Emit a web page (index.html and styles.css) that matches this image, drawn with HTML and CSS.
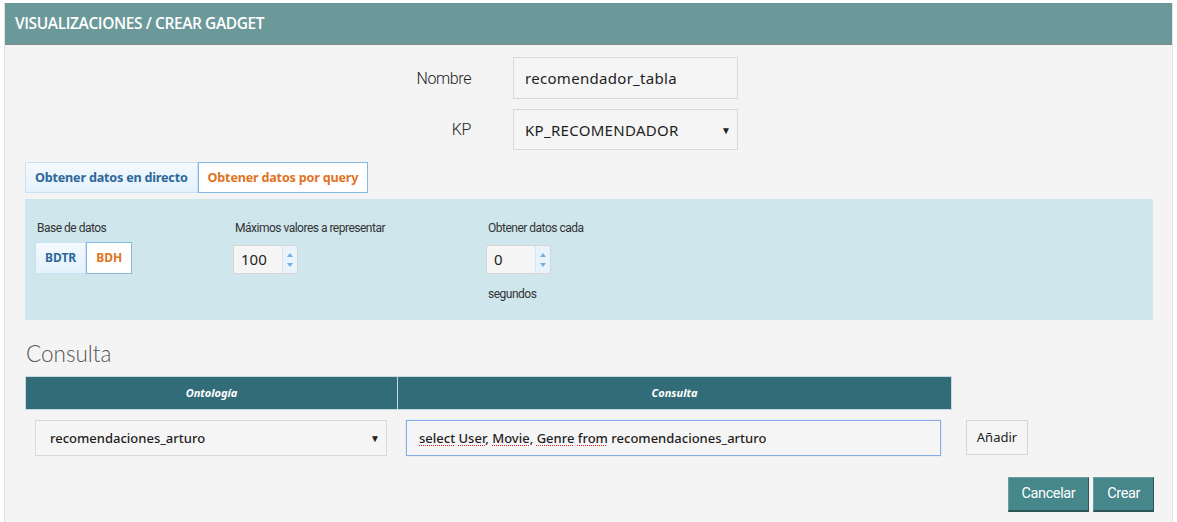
FILE: index.html
```html
<!DOCTYPE html>
<html lang="es">
<head>
<meta charset="utf-8">
<title>Crear gadget</title>
<link rel="stylesheet" href="styles.css">
</head>
<body>
<div class="card">
  <div class="card-head">VISUALIZACIONES / CREAR GADGET</div>
  <div class="card-body">
    <div class="form-row">
      <label class="form-label">Nombre</label>
      <div class="field"><span>recomendador_tabla</span></div>
    </div>
    <div class="form-row form-row-kp">
      <label class="form-label">KP</label>
      <div class="field field-select"><span>KP_RECOMENDADOR</span><span class="caret">▼</span></div>
    </div>

    <div class="tabs">
      <div class="tab">Obtener datos en directo</div>
      <div class="tab tab-active">Obtener datos por query</div>
    </div>

    <div class="panel">
      <div class="col col-db">
        <div class="col-label">Base de datos</div>
        <div class="btn-group">
          <div class="seg">BDTR</div>
          <div class="seg seg-active">BDH</div>
        </div>
      </div>
      <div class="col col-max">
        <div class="col-label">Máximos valores a representar</div>
        <div class="spin"><span class="spin-val">100</span><span class="spin-btns"><span class="up"></span><span class="down"></span></span></div>
      </div>
      <div class="col">
        <div class="col-label">Obtener datos cada</div>
        <div class="spin"><span class="spin-val">0</span><span class="spin-btns"><span class="up"></span><span class="down"></span></span></div>
        <div class="col-label col-sub">segundos</div>
      </div>
    </div>

    <h2 class="section-title">Consulta</h2>
    <div class="qtable">
      <div class="qhead">
        <div class="qh qh-onto">Ontología</div>
        <div class="qh qh-query">Consulta</div>
      </div>
      <div class="qrow">
        <div class="qcell qcell-onto">
          <div class="field field-select field-small"><span>recomendaciones_arturo</span><span class="caret">▼</span></div>
        </div>
        <div class="qcell qcell-query">
          <div class="field field-small field-focus"><span><span class="spell">select</span> <span class="spell">User</span>, <span class="spell">Movie</span>, <span class="spell">Genre</span> <span class="spell">from</span> recomendaciones_arturo</span></div>
        </div>
        <div class="add-btn">Añadir</div>
      </div>
    </div>

    <div class="actions">
      <div class="btn">Cancelar</div>
      <div class="btn">Crear</div>
    </div>
  </div>
</div>
</body>
</html>
```

FILE: styles.css
```css
* { box-sizing: border-box; }
html, body { margin: 0; padding: 0; background: #ffffff; }
body { font-family: Roboto, "Noto Sans", sans-serif; color: #333; }

.card {
  margin: 3px 4px 0 4px;
  width: 1169px;
  border-left: 1px solid #e2e2e2;
  border-right: 1px solid #e2e2e2;
  background: #f4f4f4;
  height: 519px;
}
.card-head {
  height: 42px;
  background: #6b9999;
  border-bottom: 1px solid #7f8c8c;
  color: #fff;
  font-family: "Open Sans", Roboto, sans-serif;
  font-weight: 600;
  font-size: 15.5px;
  letter-spacing: -0.4px;
  line-height: 41px;
  padding-left: 10px;
}
.card-body { padding-top: 12px; }

.form-row { display: flex; align-items: center; height: 42px; }
.form-row-kp { margin-top: 10px; height: 41px; }
.form-label {
  width: 466px;
  text-align: right;
  margin-right: 42px;
  font-size: 16px;
  font-weight: 300;
  letter-spacing: -0.4px;
  color: #222;
}
.field {
  width: 225px;
  height: 100%;
  border: 1px solid #d9d9d9;
  background: #f5f5f5;
  display: flex;
  align-items: center;
  padding: 0 11px;
  font-family: "Noto Sans", sans-serif;
  font-size: 15px;
  letter-spacing: 0.3px;
  color: #1e1e1e;
}
.field-select { justify-content: space-between; padding-right: 6px; }
.caret { font-size: 10px; color: #222; letter-spacing: 0; }

.tabs { display: flex; margin: 12px 0 0 20px; height: 31px; }
.tab {
  padding: 0 9px;
  border: 1px solid #c9e1f3;
  background: linear-gradient(#f4f9fe, #e4f1fc);
  color: #2c679a;
  font-family: "Noto Sans", sans-serif;
  font-weight: 700;
  font-size: 12.6px;
  letter-spacing: -0.2px;
  line-height: 29px;
}
.tab-active {
  background: #fff;
  border-color: #85b7e3;
  color: #e07324;
}

.panel {
  margin: 6px 0 0 20px;
  width: 1128px;
  height: 121px;
  background: #cfe6ed;
  display: flex;
  padding: 21px 10px 20px;
}
.col { display: flex; flex-direction: column; align-items: flex-start; }
.col-db { width: 198px; }
.col-max { width: 253px; }
.col-label {
  font-size: 12px;
  letter-spacing: -0.5px;
  line-height: 17px;
  padding-left: 2px;
  color: #333;
}
.col-sub { margin-top: 12px; }

.btn-group { display: flex; margin-top: 5px; height: 32px; }
.seg {
  padding: 0 9px;
  border: 1px solid #c9e1f3;
  background: linear-gradient(#f4f9fe, #e4f1fc);
  color: #2c679a;
  font-family: "Noto Sans", sans-serif;
  font-weight: 700;
  font-size: 12px;
  line-height: 30px;
}
.seg-active { background: #fff; border-color: #85b7e3; color: #e07324; }

.spin {
  margin-top: 8px;
  width: 65px;
  height: 29px;
  border: 1px solid #d6d6d6;
  background: #f5f5f5;
  display: flex;
}
.spin-val {
  flex: 1;
  padding-left: 7px;
  font-family: "Noto Sans", sans-serif;
  font-size: 15px;
  line-height: 27px;
  color: #1e1e1e;
}
.spin-btns {
  width: 15px;
  border-left: 1px solid #d9e5ee;
  background: #e8f3fc;
  display: flex;
  flex-direction: column;
  justify-content: center;
  align-items: center;
  gap: 6px;
}
.up, .down { width: 0; height: 0; border-left: 3.5px solid transparent; border-right: 3.5px solid transparent; }
.up { border-bottom: 4px solid #7aaee0; }
.down { border-top: 4px solid #7aaee0; }

.section-title {
  margin: 20px 0 8px 21px;
  font-family: Lato, Roboto, sans-serif;
  font-weight: 300;
  font-size: 22.5px;
  line-height: 28px;
  color: #555;
}

.qtable { margin-left: 20px; }
.qhead { display: flex; width: 927px; height: 34px; background: #336c79; border: 1px solid #c5dcdf; }
.qh {
  color: #fff;
  font-family: "Noto Sans", sans-serif;
  font-weight: 700;
  font-style: italic;
  font-size: 11px;
  line-height: 32px;
  text-align: center;
}
.qh-onto { width: 372px; border-right: 1px solid #c5dcdf; }
.qh-query { flex: 1; }

.qrow { display: flex; align-items: flex-start; margin-top: 10px; height: 36px; }
.qcell-onto { width: 372px; padding-left: 10px; padding-right: 10px; height: 36px; }
.qcell-query { width: 554px; padding-left: 9px; padding-right: 10px; height: 36px; }
.field-small { width: 100%; height: 36px; font-size: 13px; font-weight: 500; letter-spacing: 0; padding-left: 14px; }
.qcell-query .field-small { padding-left: 12px; }
.field-focus { border-color: #88acea; box-shadow: 0 0 1px #a8c4f0; }
.spell { text-decoration: underline dotted #e02020; text-decoration-thickness: 1px; text-underline-offset: 2px; }
.add-btn {
  margin-left: 15px;
  width: 62px;
  height: 35px;
  border: 1px solid #d6d6d6;
  background: #f5f5f5;
  font-family: "Noto Sans", sans-serif;
  font-size: 13px;
  line-height: 33px;
  text-align: center;
  color: #222;
}

.actions { display: flex; justify-content: flex-end; gap: 4px; width: 1149px; margin-top: 21px; }
.btn {
  height: 35px;
  padding: 0 13px;
  background: #45878a;
  border: 1px solid #6e9c9c;
  border-right-color: #2f5456;
  border-bottom: 2px solid #2f5456;
  color: #fff;
  font-size: 14.5px;
  letter-spacing: -0.4px;
  line-height: 32px;
}
```
